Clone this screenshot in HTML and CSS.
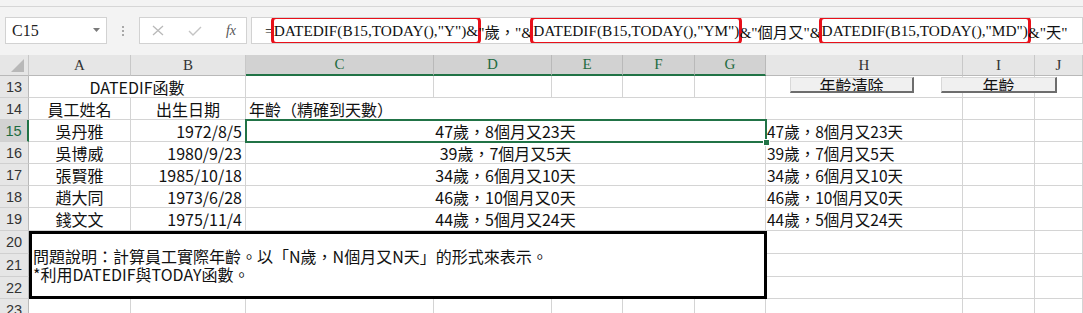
FILE: index.html
```html
<!DOCTYPE html>
<html lang="zh-Hant">
<head>
  <meta charset="UTF-8">
  <title>DATEDIF函數</title>
  <link rel="stylesheet" href="styles.css">
</head>
<body>
  <div class="ribbon-edge"></div>

  <div class="fbar">
    <div class="namebox">
      <span>C15</span>
      <svg class="caret" width="7" height="4" viewBox="0 0 7 4"><path d="M0 0h7L3.5 4z" fill="#7a7a7a"/></svg>
    </div>
    <div class="grip"><i></i><i></i><i></i></div>
    <div class="fbtns">
      <svg width="12" height="11" viewBox="0 0 12 11"><path d="M1 1l10 9M11 1L1 10" stroke="#b9b9b9" stroke-width="1.3" fill="none"/></svg>
      <svg width="14" height="10" viewBox="0 0 14 10"><path d="M1 5l4 4 8-8" stroke="#c4c4c4" stroke-width="1.4" fill="none"/></svg>
      <span class="fx">fx</span>
    </div>
    <div class="formula">=<span class="hl">DATEDIF(B15,TODAY(),"Y")&amp;</span>"歲，"&amp;<span class="hl">DATEDIF(B15,TODAY(),"YM")</span>&amp;"個月又"&amp;<span class="hl">DATEDIF(B15,TODAY(),"MD")</span>&amp;"天"</div>
  </div>

  <div class="sheet-wrap">
    <div class="sheet">
      <div class="corner"><span></span></div>
      <div class="hd">A</div>
      <div class="hd">B</div>
      <div class="hd sel">C</div>
      <div class="hd sel">D</div>
      <div class="hd sel">E</div>
      <div class="hd sel">F</div>
      <div class="hd sel">G</div>
      <div class="hd">H</div>
      <div class="hd">I</div>
      <div class="hd">J</div>

      <div class="rh">13</div>
      <div class="c ctr span2">DATEDIF函數</div>
      <div class="c"></div><div class="c"></div><div class="c"></div><div class="c"></div><div class="c"></div>
      <div class="c"></div><div class="c"></div><div class="c"></div>

      <div class="rh">14</div>
      <div class="c ctr">員工姓名</div>
      <div class="c ctr">出生日期</div>
      <div class="c span5">年齡（精確到天數）</div>
      <div class="c"></div><div class="c"></div><div class="c"></div>

      <div class="rh rsel">15</div>
      <div class="c ctr">吳丹雅</div>
      <div class="c rt">1972/8/5</div>
      <div class="c ctr span5">47歲，8個月又23天</div>
      <div class="c val">47歲，8個月又23天</div>
      <div class="c"></div><div class="c"></div>

      <div class="rh">16</div>
      <div class="c ctr">吳博威</div>
      <div class="c rt">1980/9/23</div>
      <div class="c ctr span5">39歲，7個月又5天</div>
      <div class="c val">39歲，7個月又5天</div>
      <div class="c"></div><div class="c"></div>

      <div class="rh">17</div>
      <div class="c ctr">張賢雅</div>
      <div class="c rt">1985/10/18</div>
      <div class="c ctr span5">34歲，6個月又10天</div>
      <div class="c val">34歲，6個月又10天</div>
      <div class="c"></div><div class="c"></div>

      <div class="rh">18</div>
      <div class="c ctr">趙大同</div>
      <div class="c rt">1973/6/28</div>
      <div class="c ctr span5">46歲，10個月又0天</div>
      <div class="c val">46歲，10個月又0天</div>
      <div class="c"></div><div class="c"></div>

      <div class="rh">19</div>
      <div class="c ctr">錢文文</div>
      <div class="c rt">1975/11/4</div>
      <div class="c ctr span5">44歲，5個月又24天</div>
      <div class="c val">44歲，5個月又24天</div>
      <div class="c"></div><div class="c"></div>

      <div class="rh">20</div>
      <div class="note">
        <p>問題說明：計算員工實際年齡。以「N歲，N個月又N天」的形式來表示。</p>
        <p>*利用DATEDIF與TODAY函數。</p>
      </div>
      <div class="c"></div><div class="c"></div><div class="c"></div>
      <div class="rh">21</div>
      <div class="c"></div><div class="c"></div><div class="c"></div>
      <div class="rh">22</div>
      <div class="c"></div><div class="c"></div><div class="c"></div>

      <div class="rh">23</div>
      <div class="c"></div><div class="c"></div><div class="c"></div><div class="c"></div><div class="c"></div>
      <div class="c"></div><div class="c"></div><div class="c"></div><div class="c"></div><div class="c"></div>
    </div>

    <div class="selection"><span class="handle"></span></div>
    <button class="xl-btn btn-clear">年齡清除</button>
    <button class="xl-btn btn-age">年齡</button>
  </div>
</body>
</html>
```

FILE: styles.css
```css
body {
  margin: 0;
  width: 1083px;
  height: 313px;
  overflow: hidden;
  background-color: #f3f3f3;
  font-family: "Noto Sans CJK TC", sans-serif;
}

.ribbon-edge {
  height: 6px;
  border-bottom: 1px solid #d6d6d6;
}

/* formula bar */
.fbar {
  display: flex;
  align-items: flex-start;
  height: 48px;
  padding: 10px 0 0 5px;
  box-sizing: border-box;
}

.namebox,
.fbtns,
.formula {
  height: 27px;
  background-color: #fff;
  border: 1px solid #d2d2d2;
  box-sizing: border-box;
  display: flex;
  align-items: center;
}

.namebox {
  width: 102px;
  padding: 0 6px;
  justify-content: space-between;
  font-family: "Liberation Serif", serif;
  font-size: 16px;
  color: #222;
}

.caret {
  margin-top: -2px;
}

.grip {
  width: 32px;
  height: 27px;
  display: flex;
  flex-direction: column;
  align-items: center;
  justify-content: center;
  gap: 2px;
}

.grip i {
  display: block;
  width: 2px;
  height: 2px;
  background-color: #a8a8a8;
}

.fbtns {
  width: 108px;
  padding: 0 10px 0 12px;
  justify-content: space-between;
}

.fx {
  font-family: "Liberation Serif", serif;
  font-style: italic;
  font-size: 14px;
  color: #555;
}

.formula {
  flex: 1;
  margin-left: 4px;
  padding-left: 13px;
  font-family: "Liberation Serif", "Noto Sans CJK TC", serif;
  font-size: 15.3px;
  color: #111;
  white-space: nowrap;
  overflow: hidden;
}

.hl {
  outline: 3px solid #e8101a;
  border-radius: 2px;
  padding: 3px 0 2px;
}

/* sheet */
.sheet-wrap {
  position: relative;
  background-color: #fff;
}

.sheet {
  display: grid;
  grid-template-columns: 29px 102px 115px 188px 118px 71px 72px 71px 197px 72px 48px;
  grid-template-rows: 21px repeat(6, 22px) 23px 23px 23px 22px 22px;
  font-size: 16px;
  color: #111;
}

.corner {
  background-color: #e6e6e6;
  border-right: 1px solid #c8c8c8;
  border-bottom: 1px solid #b9b9b9;
  position: relative;
}

.corner span {
  position: absolute;
  right: 4px;
  bottom: 3px;
  width: 0;
  height: 0;
  border-left: 13px solid transparent;
  border-bottom: 13px solid #b8b8b8;
}

.hd {
  background-color: #e6e6e6;
  border-right: 1px solid #c8c8c8;
  border-bottom: 1px solid #b9b9b9;
  display: flex;
  align-items: center;
  justify-content: center;
  font-family: "Liberation Serif", serif;
  font-size: 15px;
  color: #333;
}

.hd.sel {
  background-color: #d2d2d2;
  color: #1e6b41;
  border-right-color: #b9b9b9;
  border-bottom: 2px solid #217346;
}

.rh {
  background-color: #e6e6e6;
  border-right: 1px solid #b9b9b9;
  border-bottom: 1px solid #d0d0d0;
  display: flex;
  align-items: center;
  justify-content: center;
  font-family: "Liberation Sans", sans-serif;
  font-size: 14.5px;
  color: #333;
}

.rh.rsel {
  background-color: #d2d2d2;
  color: #1e6b41;
  border-right: 2px solid #217346;
}

.c {
  border-right: 1px solid #d4d4d4;
  border-bottom: 1px solid #d4d4d4;
  display: flex;
  align-items: center;
  padding: 0 3px;
  white-space: nowrap;
  box-sizing: border-box;
  line-height: 20px;
}

.ctr {
  justify-content: center;
}

.rt {
  justify-content: flex-end;
}

.span2 {
  grid-column: span 2;
}

.span5 {
  grid-column: span 5;
}

.val {
  padding-left: 1px;
  font-size: 15.5px;
}

.note {
  grid-column: 2 / 9;
  grid-row: span 3;
  border: 3px solid #000;
  margin-right: -1px;
  position: relative;
  z-index: 1;
  display: flex;
  flex-direction: column;
  justify-content: center;
  padding-left: 1px;
  background-color: #fff;
}

.note p {
  margin: 0;
  line-height: 18px;
}

/* overlays */
.selection {
  position: absolute;
  left: 245px;
  top: 64px;
  width: 522px;
  height: 24px;
  border: 2px solid #217346;
  box-sizing: border-box;
  pointer-events: none;
}

.handle {
  position: absolute;
  right: -5px;
  bottom: -5px;
  width: 5px;
  height: 5px;
  background-color: #217346;
  border: 1px solid #fff;
}

.xl-btn {
  position: absolute;
  top: 22px;
  height: 16px;
  padding: 0;
  background-color: #f0f0f0;
  border: 1px solid #d8d8d8;
  border-right: 2px solid #6d6d6d;
  border-bottom: 2px solid #6d6d6d;
  box-sizing: border-box;
  font-family: "Noto Sans CJK TC", sans-serif;
  font-size: 16px;
  line-height: 12px;
  color: #111;
  overflow: hidden;
}

.btn-clear {
  left: 790px;
  width: 124px;
}

.btn-age {
  left: 941px;
  width: 116px;
}
```
